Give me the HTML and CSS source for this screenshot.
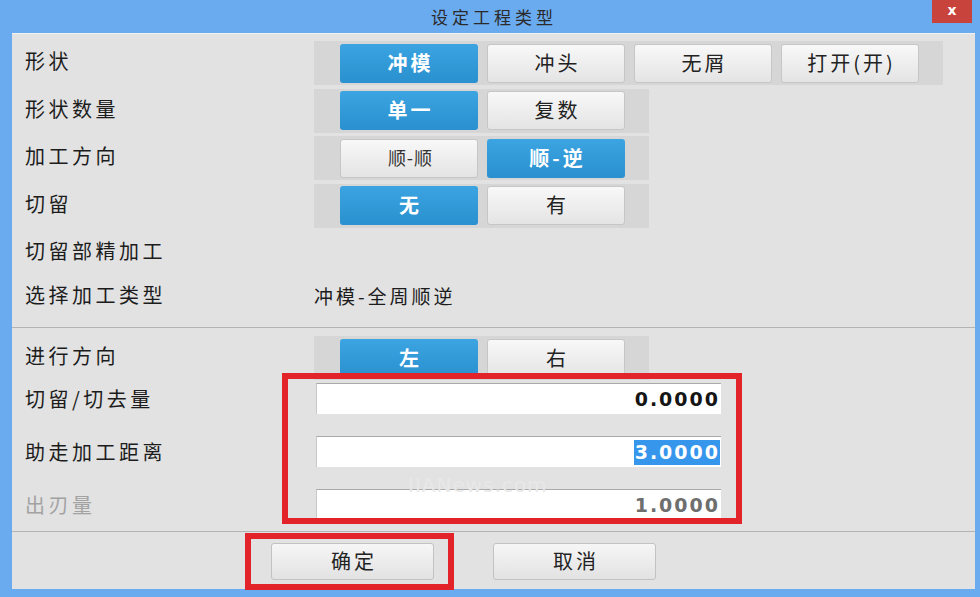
FILE: index.html
```html
<!DOCTYPE html>
<html lang="zh-CN">
<head>
  <meta charset="UTF-8" />
  <title>设定工程类型</title>
  <link rel="stylesheet" href="styles.css">
</head>
<body>
  <div class="window">
    <div class="titlebar">
      <span class="title">设定工程类型</span>
      <button class="close">x</button>
    </div>

    <div class="panel">
      <div class="section top">
        <div class="row">
          <div class="label">形状</div>
          <div class="group">
            <button class="btn on">冲模</button>
            <button class="btn">冲头</button>
            <button class="btn">无屑</button>
            <button class="btn">打开(开)</button>
          </div>
        </div>
        <div class="row">
          <div class="label">形状数量</div>
          <div class="group">
            <button class="btn on">单一</button>
            <button class="btn">复数</button>
          </div>
        </div>
        <div class="row">
          <div class="label">加工方向</div>
          <div class="group">
            <button class="btn thin">顺-顺</button>
            <button class="btn on">顺-逆</button>
          </div>
        </div>
        <div class="row">
          <div class="label">切留</div>
          <div class="group">
            <button class="btn on">无</button>
            <button class="btn">有</button>
          </div>
        </div>
        <div class="row text-row">
          <div class="label">切留部精加工</div>
        </div>
        <div class="row text-row">
          <div class="label">选择加工类型</div>
          <div class="value">冲模-全周顺逆</div>
        </div>
      </div>

      <div class="section mid">
        <div class="row">
          <div class="label">进行方向</div>
          <div class="group">
            <button class="btn on">左</button>
            <button class="btn">右</button>
          </div>
        </div>
        <div class="fields">
          <div class="field">
            <div class="label">切留/切去量</div>
            <div class="input"><span>0.0000</span></div>
          </div>
          <div class="field">
            <div class="label">助走加工距离</div>
            <div class="input"><span class="selected">3.0000</span></div>
          </div>
          <div class="field disabled">
            <div class="label">出刃量</div>
            <div class="input"><span>1.0000</span></div>
          </div>
        </div>
      </div>

      <div class="footer">
        <button class="action">确定</button>
        <button class="action">取消</button>
      </div>
    </div>

    <div class="watermark">IIANews.com</div>
    <div class="mark mark-fields"></div>
    <div class="mark mark-ok"></div>
  </div>
</body>
</html>
```

FILE: styles.css
```css
body {
  margin: 0;
  padding: 0;
  background: #6aabf0;
  font-family: "Noto Sans CJK SC", "Noto Sans", sans-serif;
  color: #1c1c1c;
}
.window {
  position: relative;
  width: 980px;
  height: 597px;
  background: #6aabf0;
  overflow: hidden;
}
.titlebar {
  position: relative;
  height: 33px;
  display: flex;
  align-items: center;
  justify-content: center;
}
.title {
  font-size: 17px;
  letter-spacing: 4px;
  color: #2a2a2a;
  margin-left: 8px;
  margin-top: -1px;
}
.close {
  position: absolute;
  top: 0;
  right: 8px;
  width: 40px;
  height: 23px;
  border: none;
  padding: 0 0 3px;
  background: #c9433d;
  color: #fff;
  font-family: "DejaVu Sans", sans-serif;
  font-size: 14px;
  font-weight: bold;
}
.panel {
  margin: 0 5px 0 12px;
  height: 556px;
  box-sizing: border-box;
  background: #e2e2e2;
  border-top: 1px solid #f2f2f2;
  display: flex;
  flex-direction: column;
}
.section.top {
  padding: 7px 0 8px;
}
.section.mid {
  border-top: 1px solid #b3b3b3;
  padding: 8px 0 11px;
}
.row {
  display: flex;
  align-items: center;
  height: 44px;
  margin-bottom: 3.5px;
}
.row.text-row {
  margin-bottom: 0;
}
.mid .row {
  margin-bottom: 0;
}
.label {
  width: 302px;
  flex-shrink: 0;
  box-sizing: border-box;
  padding-left: 13px;
  font-size: 20px;
  letter-spacing: 3.5px;
  color: #1c1c1c;
}
.row .label {
  margin-top: -5px;
}
.value {
  font-size: 19px;
  letter-spacing: 3px;
  color: #1c1c1c;
  margin-top: -4px;
}
.group {
  display: flex;
  gap: 9px;
  height: 44px;
  box-sizing: border-box;
  padding: 2px 24px 2px 26px;
  background: #d6d6d6;
  align-items: center;
}
.btn {
  width: 138px;
  height: 39px;
  box-sizing: border-box;
  border: 1px solid #c6c6c6;
  border-radius: 3px;
  background: linear-gradient(#f8f8f8, #e4e4e4);
  font-family: "Noto Sans CJK SC", sans-serif;
  font-size: 20px;
  letter-spacing: 3px;
  color: #222;
  padding: 0 0 2px 3px;
}
.btn.thin {
  font-size: 18px;
  letter-spacing: 1px;
  color: #333;
}
.btn.on {
  border: none;
  background: linear-gradient(#3ba4e1, #2a90cf);
  color: #fff;
  font-weight: bold;
}
.fields {
  display: flex;
  flex-direction: column;
  gap: 22px;
  margin-top: 3px;
}
.field {
  display: flex;
  align-items: center;
  height: 31px;
}
.field .label {
  margin-top: 0;
}
.field.disabled .label {
  color: #a2a2a2;
}
.input {
  width: 405px;
  height: 31px;
  margin-left: 2px;
  box-sizing: border-box;
  background: #fff;
  border-top: 1px solid #a9a9a9;
  border-left: 1px solid #c9c9c9;
  display: flex;
  align-items: center;
  justify-content: flex-end;
  padding-right: 1px;
  font-family: "DejaVu Sans", sans-serif;
  font-size: 19px;
  font-weight: bold;
  letter-spacing: 2px;
  color: #151515;
}
.input span {
  line-height: 25px;
  padding-left: 1px;
}
.input .selected {
  background: #3596ec;
  color: #fff;
}
.field.disabled .input {
  color: #6e6e6e;
}
.footer {
  border-top: 1px solid #b3b3b3;
  padding: 11px 0 9px 259px;
  display: flex;
  gap: 59px;
}
.action {
  width: 163px;
  height: 37px;
  box-sizing: border-box;
  border: 1px solid #c2c2c2;
  border-radius: 3px;
  background: linear-gradient(#f6f6f6, #e2e2e2);
  font-family: "Noto Sans CJK SC", sans-serif;
  font-size: 20px;
  letter-spacing: 3px;
  color: #222;
  padding: 0 0 2px 3px;
}
.watermark {
  position: absolute;
  left: 408px;
  top: 473px;
  font-family: "DejaVu Sans", sans-serif;
  font-size: 20px;
  color: #e8e8e8;
  letter-spacing: 1px;
}
.mark {
  position: absolute;
  border: 6px solid #e2232a;
  box-sizing: border-box;
}
.mark-fields {
  left: 282px;
  top: 373px;
  width: 460px;
  height: 151px;
}
.mark-ok {
  left: 245px;
  top: 533px;
  width: 209px;
  height: 57px;
}
```
